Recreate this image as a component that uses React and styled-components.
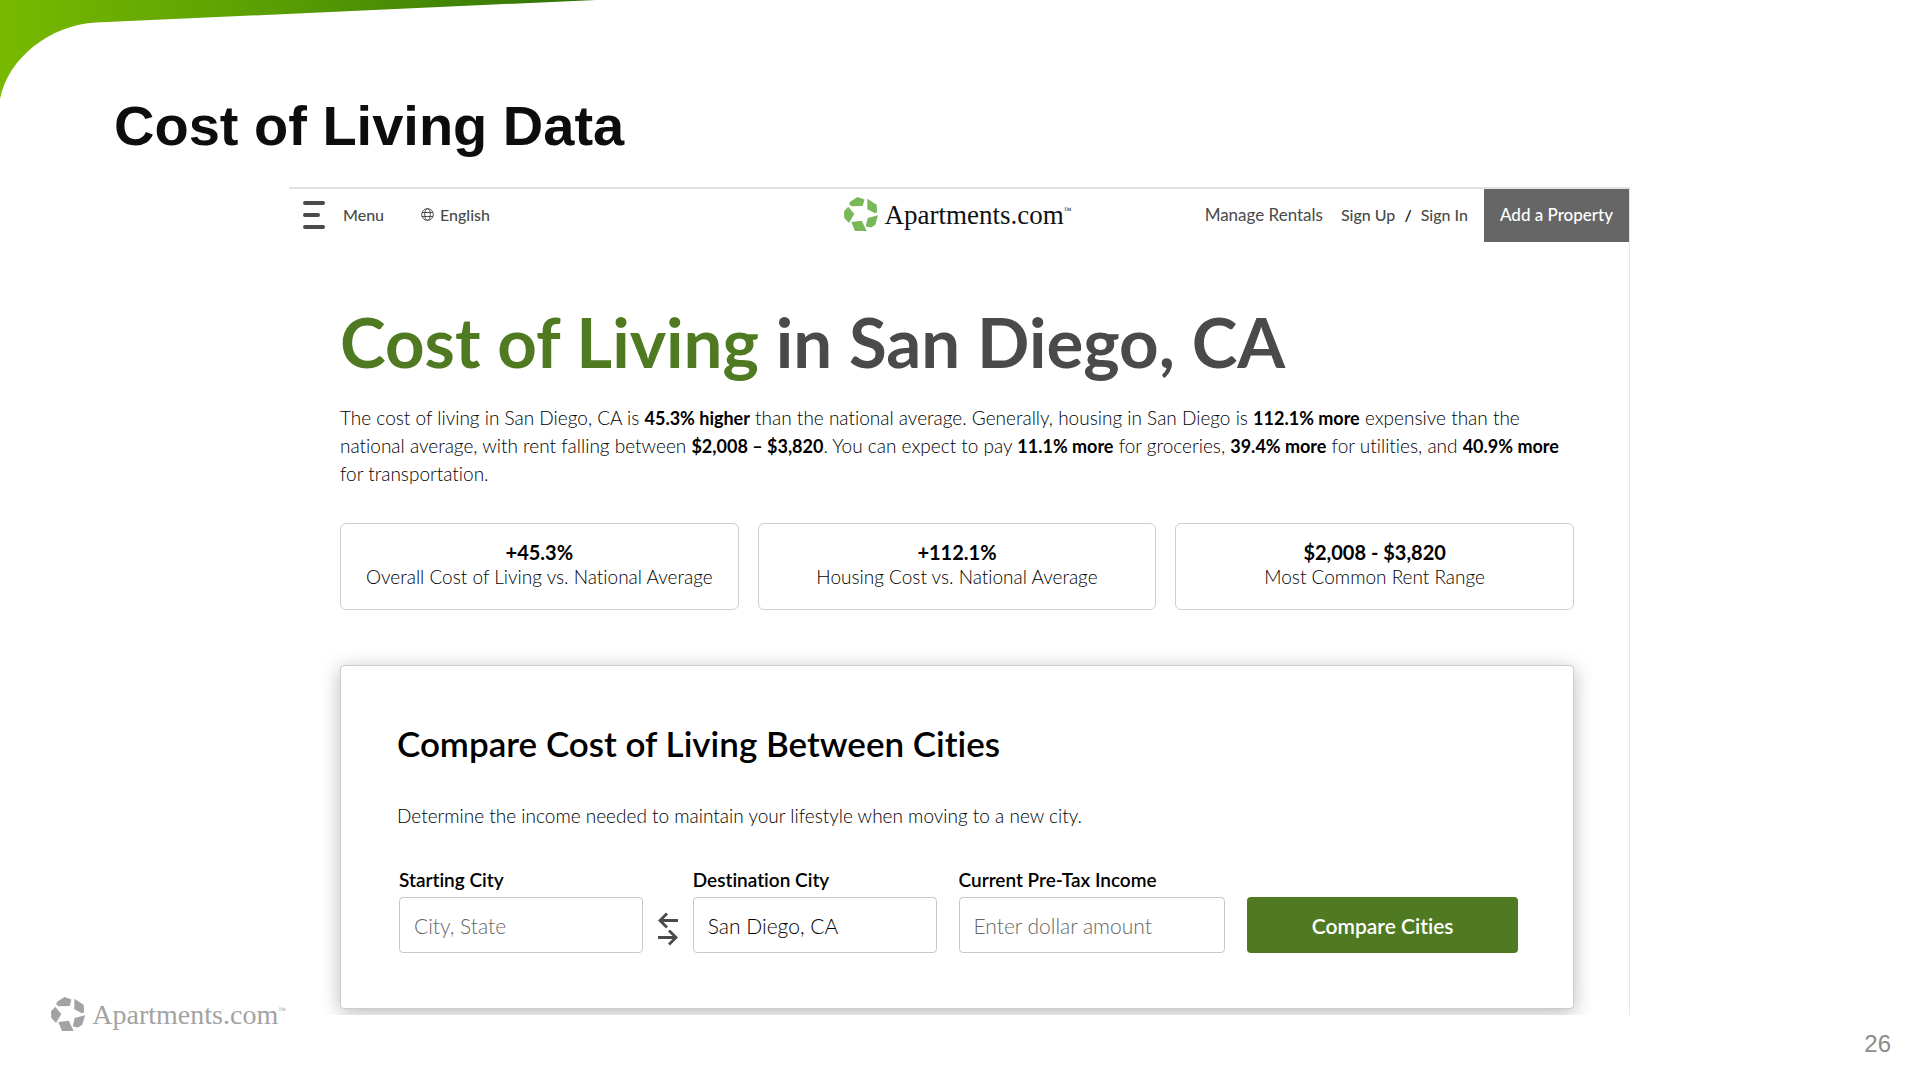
import React from 'react';
import styled, { createGlobalStyle } from 'styled-components';

const App = () => {
    return (
        <>
            <GlobalStyle />
            <Slide>
                <Swoosh />
                <SlideTitle>Cost of Living Data</SlideTitle>
                <SlideBody>
                    <Brand>
                        <LogoMark />
                        <LogoText>Apartments.com<Trade>™</Trade></LogoText>
                    </Brand>
                    <Screen>
                        <NavBar />
                        <Content>
                            <PageTitle><Accent>Cost of Living</Accent> in San Diego, CA</PageTitle>
                            <Summary />
                            <Stats>
                                {stats.map(stat => (
                                    <StatCard key={stat.label}>
                                        <StatValue>{stat.value}</StatValue>
                                        <StatLabel>{stat.label}</StatLabel>
                                    </StatCard>
                                ))}
                            </Stats>
                            <Compare />
                        </Content>
                    </Screen>
                    <SlideNumber>26</SlideNumber>
                </SlideBody>
            </Slide>
        </>
    )
}

export default App;

const stats = [
    { value: '+45.3%', label: 'Overall Cost of Living vs. National Average' },
    { value: '+112.1%', label: 'Housing Cost vs. National Average' },
    { value: '$2,008 - $3,820', label: 'Most Common Rent Range' },
]

//CSS//
const GlobalStyle = createGlobalStyle`
* {
    box-sizing: border-box;
}

body {
    margin: 0;
    background-color: #fff;
    font-family: Lato, "Open Sans", sans-serif;
    color: #000;
}

body, button, input {
    font-variant-ligatures: none;
}

h1, h2, p {
    margin: 0;
}
`

const Slide = styled.div`
position: relative;
display: flex;
flex-direction: column;
min-height: 100vh;
overflow: hidden;
`

const SlideTitle = styled.h1`
padding: 94px 114px 29px;
font-family: "Liberation Sans", Arial, sans-serif;
font-size: 56px;
line-height: 64px;
font-weight: 700;
color: #0d0d0d;
`

const SlideBody = styled.div`
flex: 1;
display: grid;
grid-template-columns: 289fr 1341fr 290fr;
`

const Brand = styled.div`
align-self: end;
justify-self: end;
display: flex;
align-items: center;
gap: 6px;
padding: 0 3px 48px 0;
font-size: 28px;
color: #a3a3a3;
`

const LogoText = styled.span`
display: flex;
font-family: "Liberation Serif", "Times New Roman", serif;
line-height: 34px;
`

const Trade = styled.span`
font-size: 8px;
line-height: 26px;
`

const SlideNumber = styled.div`
align-self: end;
justify-self: end;
padding: 0 29px 22px 0;
font-family: "Liberation Sans", Arial, sans-serif;
font-size: 24px;
line-height: 28px;
color: #8c8c8c;
`

const Screen = styled.main`
align-self: start;
overflow: hidden;
padding-bottom: 6px;
border-top: 2px solid #e2e3dc;
border-right: 1px solid #e6e6e6;
`

const Content = styled.div`
padding: 0 55px 0 51px;
`

const PageTitle = styled.h1`
margin-top: 58px;
font-size: 69px;
line-height: 84px;
font-weight: 700;
color: #4a4a4a;
`

const Accent = styled.span`
color: #4f7a21;
`

const Stats = styled.div`
display: grid;
grid-template-columns: repeat(3, 1fr);
gap: 19px;
margin-top: 36px;
`

const StatCard = styled.div`
padding: 16px 8px 20px;
border: 1px solid #cfcfcf;
border-radius: 6px;
text-align: center;
`

const StatValue = styled.div`
font-size: 20px;
line-height: 25px;
font-weight: 700;
`

const StatLabel = styled.div`
font-size: 19px;
line-height: 24px;
font-weight: 300;
`

///////////////////////////////////////////////////////////////////////////////////////////////////
const NavBar = () => (
    <Nav>
        <NavSide>
            <MenuButton>
                <svg width="22" height="28" viewBox="0 0 22 28" stroke="#4a4a4a" strokeWidth="4" strokeLinecap="round">
                    <path d="M2 2H20M2 14H15M2 26H20" />
                </svg>
                Menu
            </MenuButton>
            <LanguageButton>
                <svg width="13" height="13" viewBox="0 0 13 13" fill="none" stroke="#4a4a4a">
                    <circle cx="6.5" cy="6.5" r="5.8" />
                    <ellipse cx="6.5" cy="6.5" rx="2.8" ry="5.8" />
                    <path d="M1.2 4.5H11.8M1.2 8.5H11.8" />
                </svg>
                English
            </LanguageButton>
        </NavSide>
        <NavBrand href="#home">
            <LogoMark fill="#79b858" />
            <LogoText>Apartments.com<Trade>™</Trade></LogoText>
        </NavBrand>
        <NavSide $end>
            <RentalsLink href="#rentals">Manage Rentals</RentalsLink>
            <SignIn>
                <NavLink href="#signup">Sign Up</NavLink>
                <span>/</span>
                <NavLink href="#signin">Sign In</NavLink>
            </SignIn>
            <AddProperty>Add a Property</AddProperty>
        </NavSide>
    </Nav>
)

const Nav = styled.nav`
display: grid;
grid-template-columns: 1fr auto 1fr;
align-items: center;
height: 53px;
padding-bottom: 2px;
font-size: 16px;
font-weight: 500;
`

const NavSide = styled.div`
display: flex;
align-items: center;
align-self: stretch;
justify-content: ${props => props.$end ? 'flex-end' : 'flex-start'};
padding-left: ${props => props.$end ? '0' : '14px'};
`

const NavButton = styled.button`
display: flex;
align-items: center;
padding: 0;
border: 0;
background: none;
font: inherit;
color: #4a4a4a;
cursor: pointer;
`

const MenuButton = styled(NavButton)`
gap: 18px;
margin-right: 37px;
`

const LanguageButton = styled(NavButton)`
gap: 6px;
`

const NavBrand = styled.a`
display: flex;
align-items: center;
gap: 5px;
padding-right: 2px;
font-size: 27px;
font-weight: 400;
color: #111;
text-decoration: none;
`

const NavLink = styled.a`
color: #4a4a4a;
text-decoration: none;
`

const RentalsLink = styled(NavLink)`
font-size: 17px;
font-weight: 400;
`

const SignIn = styled.div`
display: flex;
gap: 9px;
margin: 0 16px 0 18px;
`

const AddProperty = styled.button`
align-self: stretch;
margin-bottom: -2px;
padding: 0 16px 2px;
border: 0;
background-color: #666;
font: inherit;
font-size: 17px;
color: #fff;
cursor: pointer;
`

///////////////////////////////////////////////////////////////////////////////////////////////////
const Summary = () => (
    <Text>
        The cost of living in San Diego, CA is <b>45.3% higher</b> than the national average. Generally, housing
        in San Diego is <b>112.1% more</b> expensive than the national average, with rent falling
        between <b>$2,008 – $3,820</b>. You can expect to pay <b>11.1% more</b> for
        groceries, <b>39.4% more</b> for utilities, and <b>40.9% more</b> for transportation.
    </Text>
)

const Text = styled.p`
margin-top: 20px;
font-size: 19px;
line-height: 27px;
font-weight: 300;

b {
    font-size: 18px;
    font-weight: 700;
}
`

///////////////////////////////////////////////////////////////////////////////////////////////////
const Compare = () => (
    <Panel>
        <PanelTitle>Compare Cost of Living Between Cities</PanelTitle>
        <PanelText>Determine the income needed to maintain your lifestyle when moving to a new city.</PanelText>
        <Form onSubmit={e => e.preventDefault()}>
            <CityPair>
                <Field>
                    <Label htmlFor="start">Starting City</Label>
                    <Input id="start" placeholder="City, State" />
                </Field>
                <SwapButton type="button" aria-label="Swap cities">
                    <svg width="20" height="34" viewBox="0 0 20 34" fill="none" stroke="#4a4a4a" strokeWidth="2.8">
                        <path d="M20 8.5H2M9 1.5L2 8.5L9 15.500" />
                        <path d="M0 25.500H18M11 18.500L18 25.500L11 32.500" />
                    </svg>
                </SwapButton>
                <Field>
                    <Label htmlFor="destination">Destination City</Label>
                    <Input id="destination" defaultValue="San Diego, CA" />
                </Field>
            </CityPair>
            <Field>
                <Label htmlFor="income">Current Pre-Tax Income</Label>
                <Input id="income" placeholder="Enter dollar amount" />
            </Field>
            <Submit>Compare Cities</Submit>
        </Form>
    </Panel>
)

const Panel = styled.section`
margin-top: 55px;
padding: 54px 55px 55px 56px;
border: 1px solid #ccc;
border-radius: 4px;
background-color: #fff;
box-shadow: 0 4px 20px rgba(0,0,0,.28);
`

const PanelTitle = styled.h2`
font-size: 35px;
line-height: 46px;
font-weight: 600;
`

const PanelText = styled.p`
margin-top: 36px;
font-size: 19px;
line-height: 27px;
font-weight: 300;
`

const Form = styled.form`
display: grid;
grid-template-columns: 538fr 267fr 271fr;
align-items: end;
gap: 22px;
margin-top: 39px;
padding-left: 2px;
`

const CityPair = styled.div`
display: flex;
align-items: flex-end;
gap: 15px;
`

const Field = styled.div`
flex: 1;
min-width: 0;
`

const Label = styled.label`
display: block;
margin-bottom: 5px;
font-size: 19px;
line-height: 24px;
font-weight: 600;
`

const Input = styled.input`
display: block;
width: 100%;
height: 56px;
padding: 0 14px;
border: 1px solid #c8c8c8;
border-radius: 4px;
background-color: #fff;
font-family: inherit;
font-size: 21px;
font-weight: 300;
color: #000;

&::placeholder {
    color: #666;
    opacity: 1;
}
`

const SwapButton = styled.button`
display: flex;
align-items: center;
height: 56px;
padding: 8px 0 0;
border: 0;
background: none;
cursor: pointer;
`

const Submit = styled.button`
height: 56px;
border: 0;
border-radius: 4px;
background-color: #4f7a21;
font-family: inherit;
font-size: 21px;
font-weight: 600;
color: #fff;
cursor: pointer;
`

///////////////////////////////////////////////////////////////////////////////////////////////////
const LogoMark = ({ fill = 'currentColor' }) => (
    <svg width="35" height="35" viewBox="0 0 35 35" fill={fill} aria-hidden="true">
        <path d="M6.500 4.5L13.500 0L20.500 2.500L18.700 9L7.500 9.300L5 7Z" />
        <path d="M23.300 1.700L32.700 7.700L33 15.700L30.500 16L23.300 12.300Z" />
        <path d="M4.300 9.700L10.300 17L5 26L0.300 21L0 14.300Z" />
        <path d="M7.300 25L17.700 23.700L22.700 34L11 34Z" />
        <path d="M23.700 21L34 18.300L31.300 27.700L27 30.500L21.700 29.500Z" />
    </svg>
)

const Swoosh = () => (
    <Corner width="600" height="100" viewBox="0 0 600 100" aria-hidden="true">
        <defs>
            <linearGradient id="leaf">
                <stop offset="0" stopColor="#78b900" />
                <stop offset="0.45" stopColor="#5a9f03" />
                <stop offset="1" stopColor="#2f7009" />
            </linearGradient>
        </defs>
        <path d="M0 0H596L96 22.500C50 25 8 58 0 99Z" fill="url(#leaf)" />
    </Corner>
)

const Corner = styled.svg`
position: absolute;
top: 0;
left: 0;
`
